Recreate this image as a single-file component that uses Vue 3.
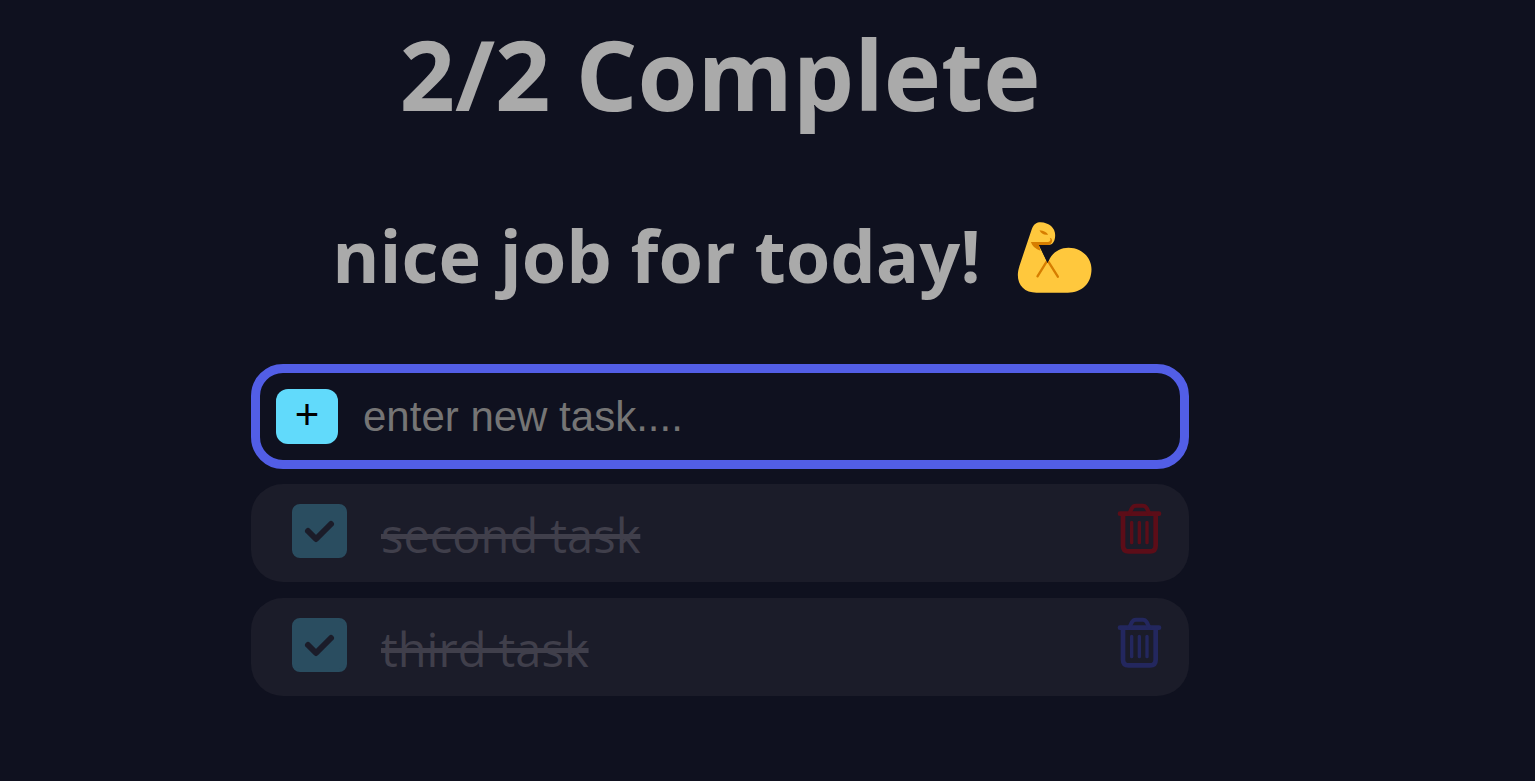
<script setup>
import { computed, ref } from 'vue'

const draft = ref('')
const tasks = ref([
  { id: 1, name: 'second task', done: true, tone: 'red' },
  { id: 2, name: 'third task', done: true, tone: 'blue' },
])
const doneCount = computed(() => tasks.value.filter((t) => t.done).length)

function addTask() {
  const name = draft.value.trim()
  if (!name) return
  tasks.value.push({ id: Date.now(), name, done: false, tone: 'blue' })
  draft.value = ''
}

function removeTask(id) {
  tasks.value = tasks.value.filter((t) => t.id !== id)
}
</script>

<template>
  <main class="page">
    <h1 class="title">{{ doneCount }}/{{ tasks.length }} Complete</h1>
    <h2 class="message">
      <span>nice job for today!</span>
      <svg class="muscle" viewBox="54 39 224 213" role="img" aria-label="flexed biceps">
        <path fill="#ffc83d" d="M98 60C104 45 113 40 124 40C150 41 168 57 168 78C168 94 162 107 151 107L120 108L146 163C154 135 178 116 208 116C248 116 277 146 277 181C277 224 248 251 206 251H112C77 251 56 230 56 198C56 188 58 180 61 170Z" />
        <path fill="#d67d00" d="M95 99H147Q153 98 154 93L152 86Q158 87 159 94Q158 107 147 108H119L124 125Q102 119 95 99ZM121 64Q141 66 147 77Q128 80 121 64Z" />
        <path fill="none" stroke="#d67d00" stroke-width="7" stroke-linecap="round" d="M141 160L115 202M149 160L176 203" />
        <path fill="#0f111f" d="M119 108L145 162L150 150L135 108Z" />
      </svg>
    </h2>

    <form class="entry" @submit.prevent="addTask">
      <button class="add" type="submit" aria-label="Add task">+</button>
      <input v-model="draft" class="field" type="text" aria-label="New task" placeholder="enter new task...." />
    </form>

    <ul class="list">
      <li v-for="task in tasks" :key="task.id" class="row" :class="{ done: task.done }">
        <label class="task">
          <span class="tick">
            <input v-model="task.done" class="box" type="checkbox" />
            <svg v-if="task.done" class="mark" viewBox="0 0 55 54" aria-hidden="true">
              <path d="M16 27L24 35L39 20" />
            </svg>
          </span>
          <span class="name">{{ task.name }}</span>
        </label>
        <button class="remove" :class="task.tone" type="button" :aria-label="`Delete ${task.name}`" @click="removeTask(task.id)">
          <svg class="bin" viewBox="50 70 135 153" aria-hidden="true">
            <path stroke-width="14" d="M59 102H176M68 104V198Q68 215 85 215H149Q166 215 166 198V104" />
            <path stroke-width="12" d="M87 101L95 85Q99 78 107 78H127Q135 78 139 85L147 101" />
            <path stroke-width="10" d="M94 128V189M117 128V189M140 128V189" />
          </svg>
        </button>
      </li>
    </ul>
  </main>
</template>

<style>
body {
  background: #0f111f;
}
</style>

<style scoped>
.page {
  box-sizing: border-box;
  width: 62%;
  max-width: 938px;
  margin-left: 251px;
  padding: 8px 0 48px;
  font-family: "Segoe UI", "Open Sans", sans-serif;
  color: #aaaaaa;
}
.title {
  margin: 0;
  font-size: 97px;
  line-height: 130px;
  text-align: center;
}
.message {
  display: flex;
  justify-content: center;
  align-items: center;
  gap: 36px;
  margin: 67px 0 59px;
  padding-right: 16px;
  font-size: 72px;
  line-height: 100px;
}
.muscle {
  width: 75px;
  height: 71px;
  margin-top: 4px;
}
.entry {
  box-sizing: border-box;
  display: flex;
  align-items: center;
  gap: 25px;
  height: 105px;
  padding: 0 16px;
  border: 9px solid #525ee6;
  border-radius: 32px;
}
.add {
  width: 62px;
  height: 55px;
  padding: 0 0 4px;
  border: 0;
  border-radius: 12px;
  background: #61dafb;
  color: #000000;
  font: 42px/48px "Liberation Sans", Arial, sans-serif;
}
.field {
  flex: 1;
  min-width: 0;
  padding: 0;
  border: 0;
  outline: 0;
  background: transparent;
  color: #aaaaaa;
  font: 42px/48px "Liberation Sans", Arial, sans-serif;
}
.field::placeholder {
  color: #757575;
  opacity: 1;
}
.list {
  display: grid;
  gap: 16px;
  margin: 15px 0 0;
  padding: 0;
  list-style: none;
}
.row {
  display: flex;
  align-items: center;
  justify-content: space-between;
  box-sizing: border-box;
  height: 98px;
  padding: 0 27px 0 41px;
  border-radius: 32px;
  background: #1b1c29;
}
.task {
  display: flex;
  align-items: center;
  gap: 34px;
}
.tick {
  display: grid;
  margin-bottom: 4px;
}
.box,
.mark {
  grid-area: 1 / 1;
  width: 55px;
  height: 54px;
}
.box {
  appearance: none;
  margin: 0;
  border: 3px solid #2a4d60;
  border-radius: 8px;
}
.box:checked {
  background: #2a4d60;
}
.mark {
  fill: none;
  stroke: #1b1c29;
  stroke-width: 6;
  stroke-linecap: round;
  stroke-linejoin: round;
  pointer-events: none;
}
.name {
  padding-top: 4px;
  font-size: 47px;
  line-height: 64px;
}
.done .name {
  color: #403f4b;
  text-decoration: line-through;
  text-decoration-thickness: 5px;
}
.remove {
  display: block;
  margin-bottom: 10px;
  padding: 0;
  border: 0;
  background: transparent;
}
.red {
  color: #5c0d18;
}
.blue {
  color: #23275e;
}
.bin {
  display: block;
  width: 45px;
  height: 51px;
  fill: none;
  stroke: currentColor;
  stroke-linecap: round;
  stroke-linejoin: round;
}
</style>
